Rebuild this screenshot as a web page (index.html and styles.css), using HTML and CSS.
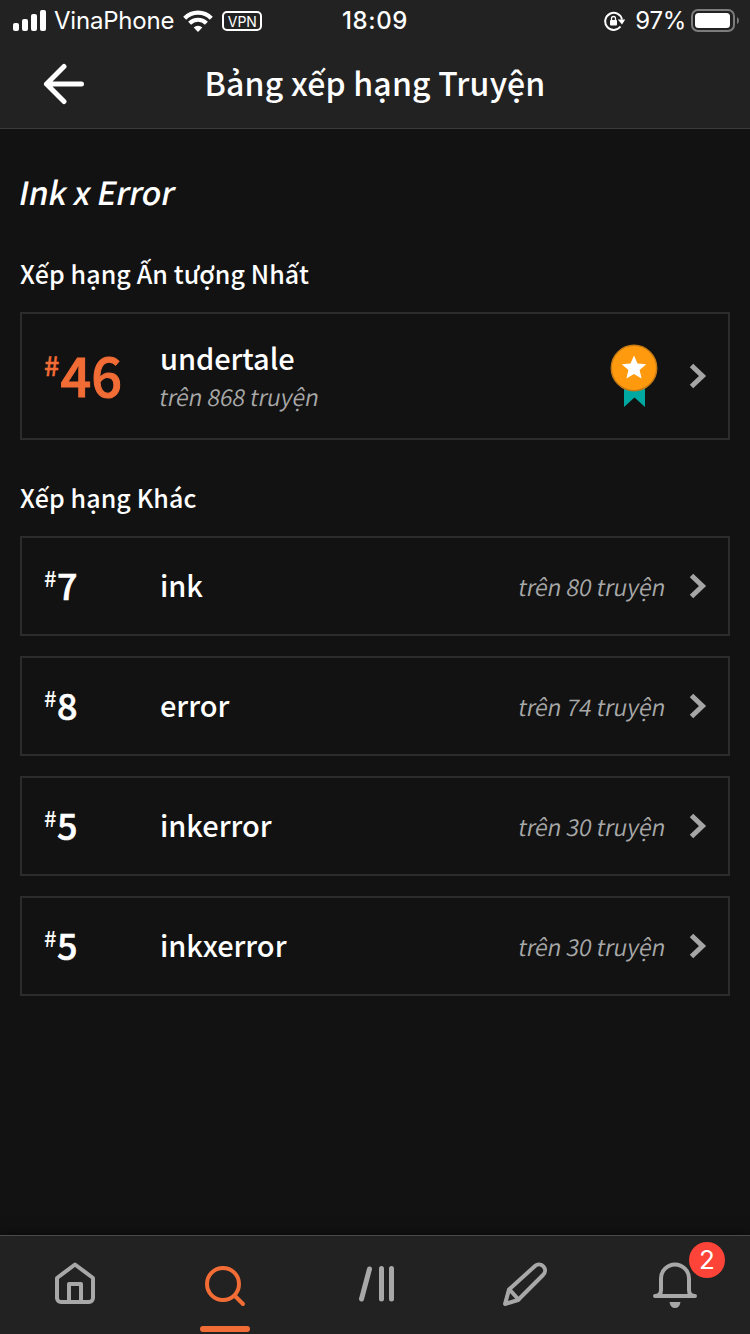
FILE: index.html
```html
<!DOCTYPE html>
<html lang="vi">
<head>
    <meta charset="UTF-8">
    <meta name="viewport" content="width=device-width, initial-scale=1.0">
    <title>Bảng xếp hạng Truyện</title>
    <link rel="stylesheet" href="styles.css">
</head>
<body>
    <header class="header">
        <div class="status">
            <div class="status-left">
                <svg class="signal" width="34" height="22" viewBox="0 0 34 22" fill="#fff">
                    <rect x="0" y="13" width="6" height="8" rx="2"/>
                    <rect x="9" y="9" width="6" height="12" rx="2"/>
                    <rect x="18" y="4" width="6" height="17" rx="2"/>
                    <rect x="27" y="0" width="6" height="21" rx="2"/>
                </svg>
                <span class="carrier">VinaPhone</span>
                <svg class="wifi" width="30" height="22" viewBox="0 0 30 22" fill="none" stroke="#fff" stroke-width="4.2">
                    <path d="M1.700 8.200a18.800 18.800 0 0 1 26.600 0"/>
                    <path d="M6.600 13.200a11.900 11.900 0 0 1 16.800 0"/>
                    <path d="M15 22l-4.300-4.500a6.200 6.200 0 0 1 8.600 0z" fill="#fff" stroke="none"/>
                </svg>
                <span class="vpn">VPN</span>
            </div>
            <span class="clock">18:09</span>
            <div class="status-right">
                <svg class="lock" width="22" height="20" viewBox="0 0 22 20" fill="none" stroke="#fff" stroke-width="2">
                    <path d="M16.500 15.500A8.500 8.500 0 1 1 18 8.500"/>
                    <path d="M13.800 8.500h7.400L18 13.500z" fill="#fff" stroke="none"/>
                    <rect x="6" y="9" width="7" height="5.500" rx="1" fill="#fff" stroke="none"/>
                    <path d="M7.500 9.500V7.500a2 2 0 0 1 4 0v2" stroke-width="1.300"/>
                </svg>
                <span class="percent">97%</span>
                <svg class="battery" width="49" height="24" viewBox="0 0 49 24">
                    <rect x="1" y="1" width="42" height="21" rx="6" fill="none" stroke="#7c7c7c" stroke-width="2"/>
                    <rect x="4" y="4" width="35" height="15" rx="3.500" fill="#fff"/>
                    <path d="M46 8q2 1 2 3.500T46 15z" fill="#7c7c7c"/>
                </svg>
            </div>
        </div>
        <div class="titlebar">
            <svg class="back" width="42" height="42" viewBox="0 0 42 42" fill="none" stroke="#fff" stroke-width="5" stroke-linecap="round" stroke-linejoin="round">
                <path d="M22 3.500L4.500 21 22 38.500M4.500 21h35"/>
            </svg>
            <h1 class="title">Bảng xếp hạng Truyện</h1>
        </div>
    </header>

    <main class="main">
        <h2 class="story">Ink x Error</h2>

        <h3 class="section">Xếp hạng Ấn tượng Nhất</h3>
        <div class="card card-top">
            <div class="rank"><span class="hash">#</span><span class="num">46</span></div>
            <div class="info">
                <div class="tag">undertale</div>
                <div class="total">trên 868 truyện</div>
            </div>
            <svg class="medal" width="48" height="64" viewBox="0 0 48 64">
                <path d="M14 40h21v23l-10.500-9.500L14 63z" fill="#00a8a2"/>
                <circle cx="24" cy="24" r="22.700" fill="#ff9a0f" stroke="#c67a14" stroke-width="1.500"/>
                <path d="M24 11.500l3.500 8 8.700 .800-6.600 5.700 2 8.500L24 30l-7.600 4.500 2-8.500-6.600-5.700 8.700-.800z" fill="#fff"/>
            </svg>
            <svg class="chevron" width="18" height="28" viewBox="0 0 18 28"><path d="M2.500 3.500L13.500 14 2.500 24.500"/></svg>
        </div>

        <h3 class="section section-other">Xếp hạng Khác</h3>
        <div class="list">
            <div class="card">
                <div class="rank"><span class="hash">#</span><span class="num">7</span></div>
                <div class="info tag">ink</div>
                <div class="total">trên 80 truyện</div>
                <svg class="chevron" width="18" height="28" viewBox="0 0 18 28"><path d="M2.500 3.500L13.500 14 2.500 24.500"/></svg>
            </div>
            <div class="card">
                <div class="rank"><span class="hash">#</span><span class="num">8</span></div>
                <div class="info tag">error</div>
                <div class="total">trên 74 truyện</div>
                <svg class="chevron" width="18" height="28" viewBox="0 0 18 28"><path d="M2.500 3.500L13.500 14 2.500 24.500"/></svg>
            </div>
            <div class="card">
                <div class="rank"><span class="hash">#</span><span class="num">5</span></div>
                <div class="info tag">inkerror</div>
                <div class="total">trên 30 truyện</div>
                <svg class="chevron" width="18" height="28" viewBox="0 0 18 28"><path d="M2.500 3.500L13.500 14 2.500 24.500"/></svg>
            </div>
            <div class="card">
                <div class="rank"><span class="hash">#</span><span class="num">5</span></div>
                <div class="info tag">inkxerror</div>
                <div class="total">trên 30 truyện</div>
                <svg class="chevron" width="18" height="28" viewBox="0 0 18 28"><path d="M2.500 3.500L13.500 14 2.500 24.500"/></svg>
            </div>
        </div>
    </main>

    <nav class="tabs">
        <a class="tab">
            <svg class="icon" width="48" height="48" viewBox="0 0 48 48">
                <path d="M6 18L24 4.500 42 18V38a4 4 0 0 1-4 4H10a4 4 0 0 1-4-4z"/>
                <path d="M18 41V24h12v17"/>
            </svg>
        </a>
        <a class="tab active">
            <svg class="icon" width="48" height="48" viewBox="0 0 48 48">
                <circle cx="22" cy="24" r="16"/>
                <path d="M34 36l8 8"/>
            </svg>
        </a>
        <a class="tab">
            <svg class="icon library" width="48" height="48" viewBox="0 0 48 48">
                <path d="M18.500 9L10.500 39M30.500 8.500V39M40.500 8.500V39"/>
            </svg>
        </a>
        <a class="tab">
            <svg class="icon" width="48" height="48" viewBox="0 0 48 48">
                <path d="M4 44l4-14.500L34 6a6 6 0 0 1 8 9L17 40z"/>
                <path d="M8.500 29.500L17.500 39.500"/>
            </svg>
        </a>
        <a class="tab">
            <svg class="icon" width="48" height="48" viewBox="0 0 48 48">
                <path d="M4 36c5 0 6-3 6-6V18.500a14 14 0 0 1 28 0V30c0 3 1 6 6 6z"/>
                <path class="clapper" d="M18.500 42h11q-1 6-5.500 6t-5.500-6z"/>
            </svg>
            <span class="badge">2</span>
        </a>
    </nav>
</body>
</html>
```
FILE: styles.css
```css
*{
    box-sizing: border-box;
}

body{
    margin: 0;
    height: 1334px;
    display: flex;
    flex-direction: column;
    background: #121212;
    color: #fff;
    font-family: "Noto Sans CJK SC", "Noto Sans", sans-serif;
    overflow: hidden;
}

svg{
    display: block;
    flex: none;
}

h1, h2, h3{
    margin: 0;
    font-weight: 500;
}

.header{
    height: 129px;
    background: #222;
    border-bottom: 1px solid #3a3a3a;
}

.status{
    height: 40px;
    padding: 0 10px 0 13px;
    display: grid;
    grid-template-columns: 1fr auto 1fr;
    align-items: center;
    font-family: Inter, "Liberation Sans", sans-serif;
    font-size: 24px;
    line-height: 42px;
}

.status-left, .status-right{
    display: flex;
    align-items: center;
}

.status-right{
    justify-content: flex-end;
}

.carrier{
    margin-left: 7px;
    letter-spacing: -0.2px;
}

.wifi{
    margin-left: 9px;
}

.vpn{
    margin-left: 9px;
    width: 40px;
    height: 20px;
    border: 2px solid #fff;
    border-radius: 5px;
    font-size: 14px;
    line-height: 17px;
    text-align: center;
}

.clock{
    margin-right: 3px;
    font-weight: 500;
    letter-spacing: 0.6px;
}

.percent{
    margin-left: 9px;
    letter-spacing: -0.3px;
}

.battery{
    margin-left: 5px;
}

.titlebar{
    height: 88px;
    padding: 0 42px;
    display: grid;
    grid-template-columns: 42px 1fr 42px;
    align-items: center;
}

.title{
    margin-bottom: 4px;
    font-size: 32px;
    line-height: 48px;
    letter-spacing: 0.2px;
    text-align: center;
}

.main{
    flex: 1;
    padding: 38px 20px 0;
}

/* slanted by hand, the font has no italic of its own */
.story, .total{
    transform: skewX(-11deg);
}

.story{
    width: fit-content;
    font-size: 32px;
    line-height: 48px;
    letter-spacing: -0.2px;
}

.section{
    margin-top: 38px;
    margin-bottom: 19px;
    font-size: 25px;
    line-height: 40px;
    letter-spacing: 0.1px;
}

.section-other{
    margin-top: 37px;
}

.card{
    height: 100px;
    padding: 0 21px 0 22px;
    display: flex;
    align-items: center;
    border: 2px solid #2c2c2c;
}

.card-top{
    height: 128px;
}

.list{
    display: flex;
    flex-direction: column;
    gap: 20px;
}

.rank{
    width: 116px;
    padding-bottom: 4px;
    display: flex;
    align-items: flex-start;
    font-weight: 500;
}

.hash{
    font-size: 22px;
    line-height: 37px;
}

.num{
    margin-left: 0.5px;
    font-size: 36px;
    line-height: 50px;
    -webkit-text-stroke: 0.6px;
}

.card-top .rank{
    color: #f26c36;
}

.card-top .hash{
    font-size: 27px;
    line-height: 46px;
    -webkit-text-stroke: 0.4px;
}

.card-top .num{
    margin-left: 1px;
    font-size: 54px;
    line-height: 64px;
    -webkit-text-stroke: 1px;
}

.info{
    flex: 1;
}

.tag{
    font-size: 29px;
    line-height: 40px;
    font-weight: 500;
    letter-spacing: -0.05px;
}

.info.tag{
    padding-bottom: 4px;
}

.card-top .tag{
    margin-top: -2px;
}

.card-top .total{
    width: fit-content;
    margin-top: 1px;
}

.total{
    font-size: 23px;
    line-height: 36px;
    font-weight: 350;
    letter-spacing: -0.1px;
    color: #a8a8a8;
}

.medal{
    margin-right: 31px;
}

.chevron{
    fill: none;
    stroke: #a5a5a5;
    stroke-width: 5;
}

.total + .chevron{
    margin-left: 23px;
}

.tabs{
    height: 99px;
    display: flex;
    background: #222;
    border-top: 1px solid #4a4a4a;
    box-shadow: 0 0 12px rgba(0, 0, 0, 0.6);
}

.tab{
    flex: 1;
    position: relative;
    display: flex;
    justify-content: center;
    padding-top: 24px;
}

.icon{
    fill: none;
    stroke: #a8a8a8;
    stroke-width: 4;
    stroke-linecap: round;
    stroke-linejoin: round;
}

.library{
    stroke-width: 5;
}

.clapper{
    fill: #a8a8a8;
    stroke: none;
}

.active .icon{
    stroke: #f26c36;
}

.active::after{
    content: "";
    position: absolute;
    bottom: 2px;
    left: 50px;
    width: 50px;
    height: 6px;
    border-radius: 3px;
    background: #f26c36;
}

.badge{
    position: absolute;
    top: 6px;
    right: 25px;
    width: 36px;
    height: 36px;
    border-radius: 50%;
    background: #fe4338;
    font-family: Inter, "Liberation Sans", sans-serif;
    font-size: 26px;
    line-height: 36px;
    text-align: center;
}
```
